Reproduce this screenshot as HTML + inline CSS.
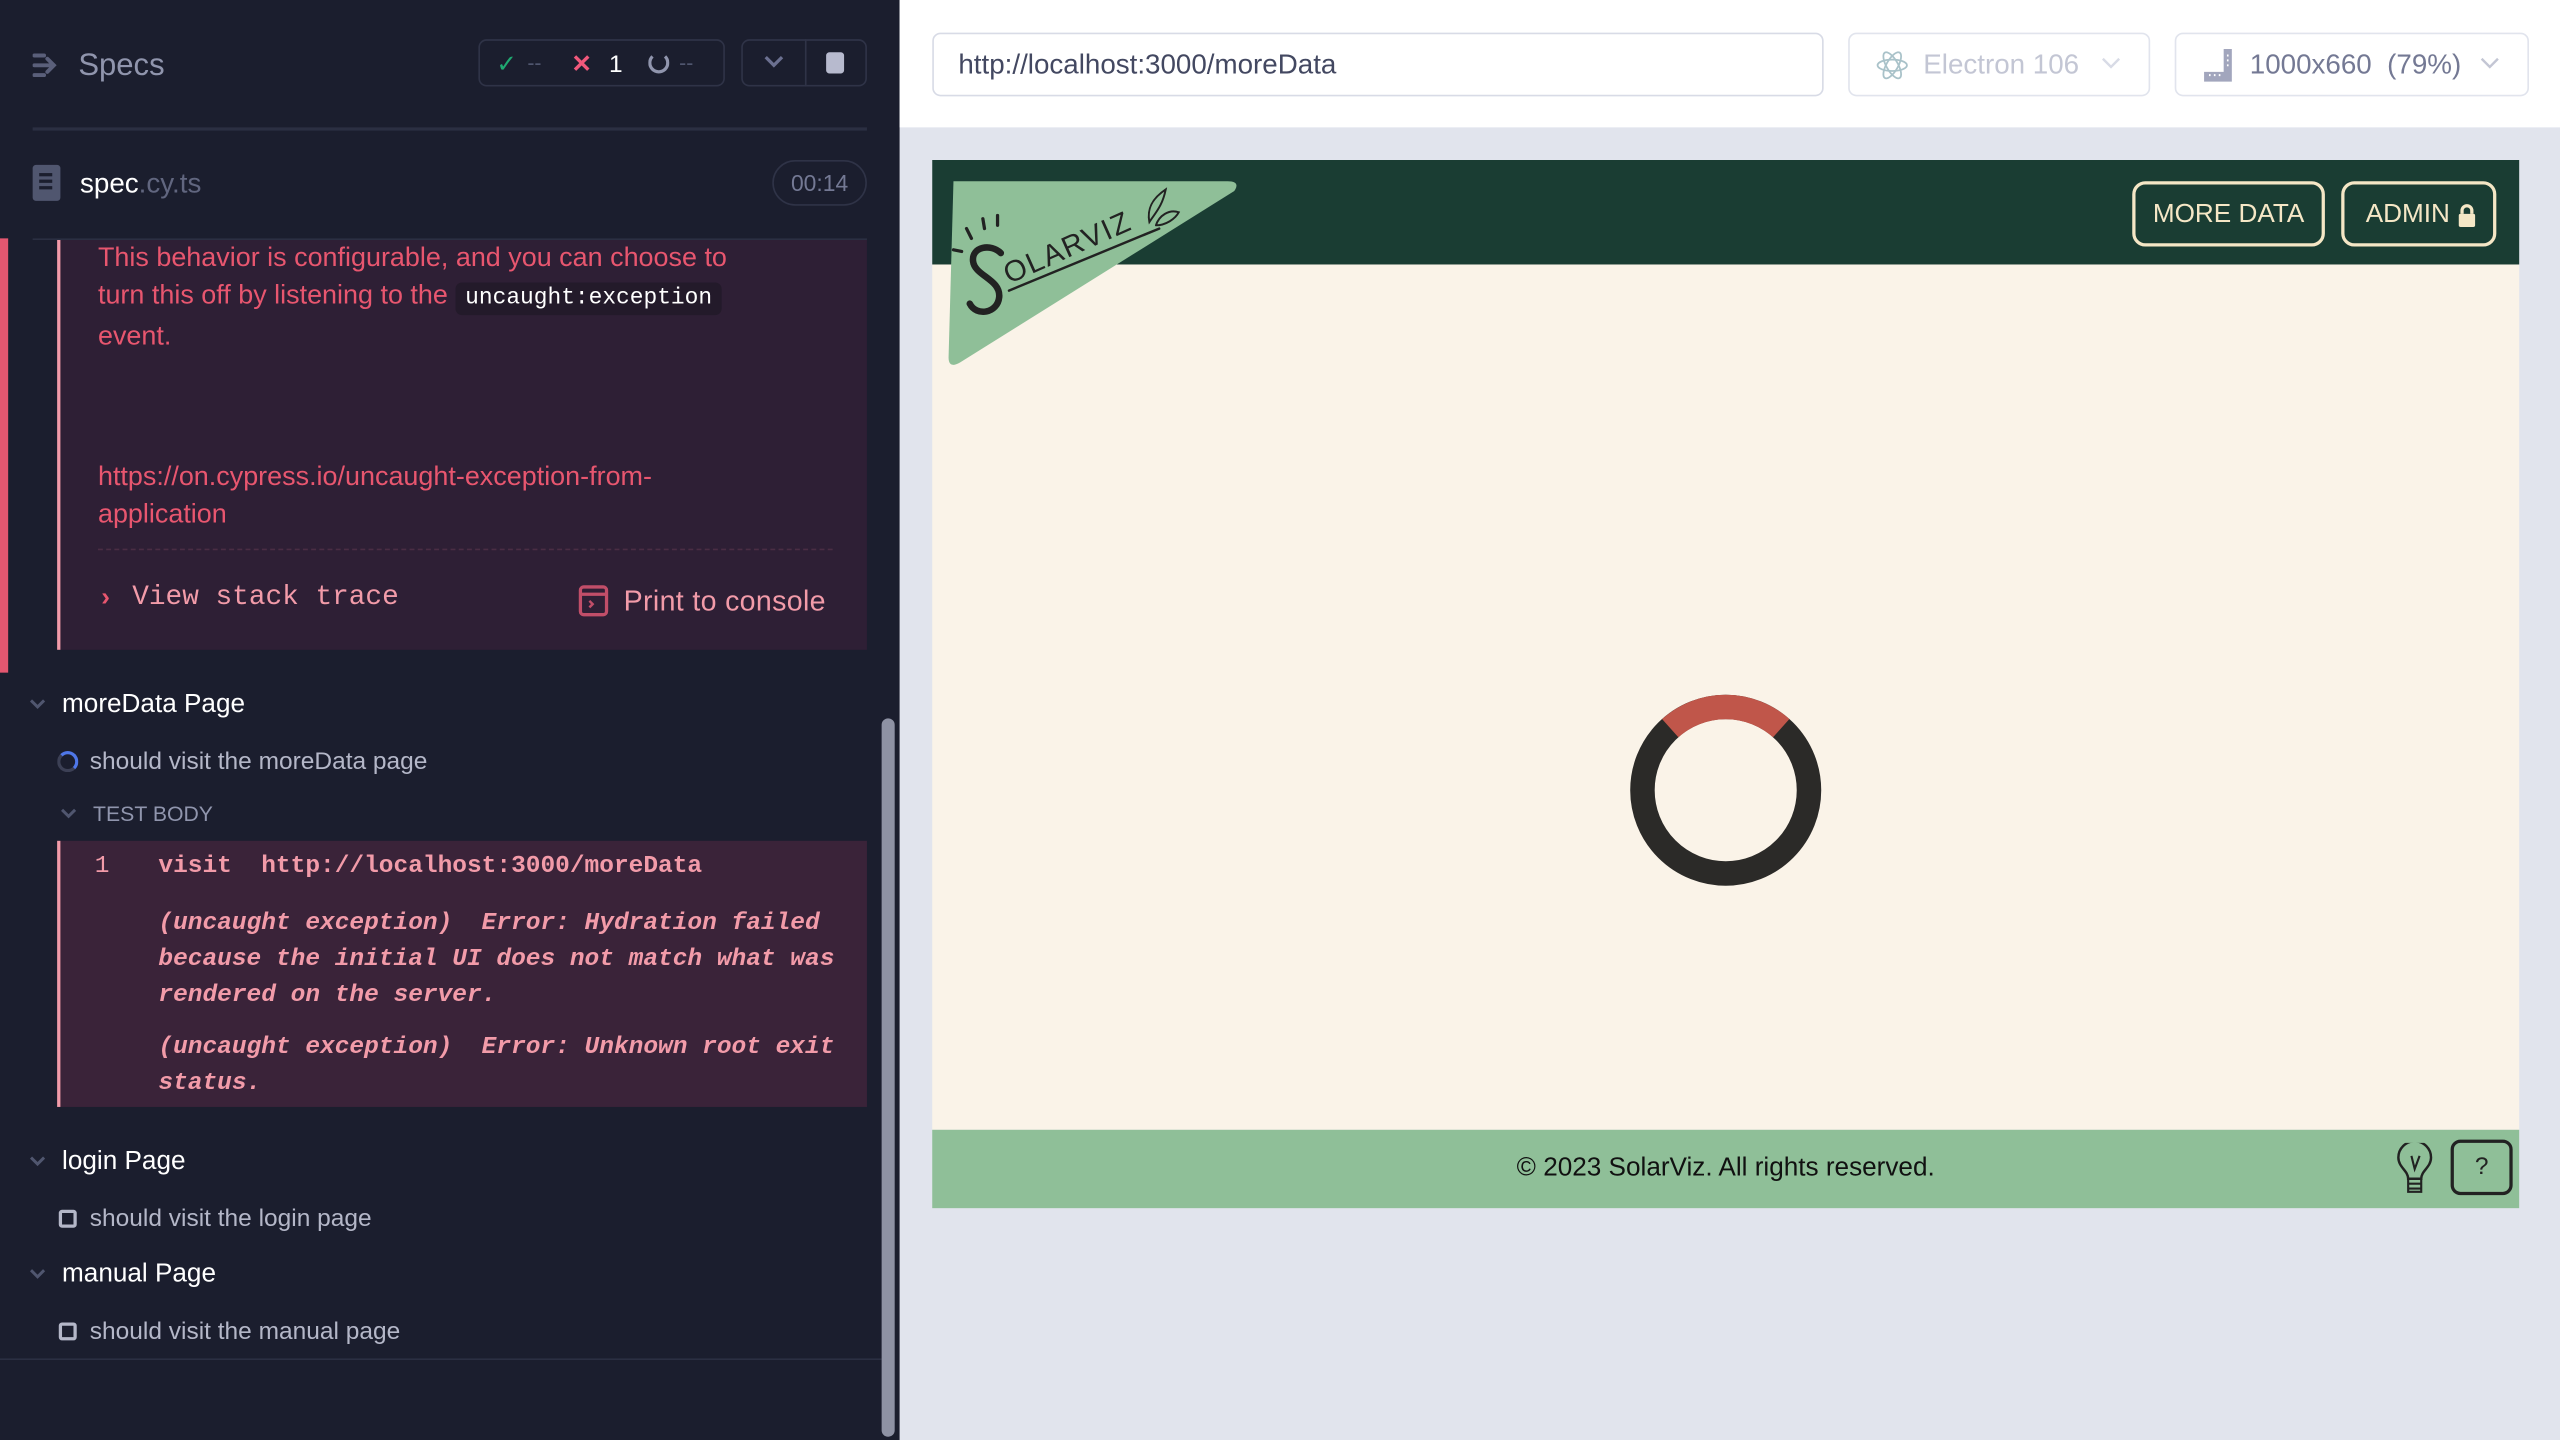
<!DOCTYPE html>
<html><head><meta charset="utf-8"><style>
*{box-sizing:border-box;margin:0;padding:0}
html,body{width:2560px;height:1440px;overflow:hidden;background:#1b1e2e}
#w{position:absolute;left:0;top:0;width:1568px;height:882px;transform:scale(1.632653);transform-origin:0 0;font-family:"Liberation Sans",sans-serif}
.a{position:absolute}
.mono{font-family:"Liberation Mono","DejaVu Sans Mono",monospace}
</style></head><body><div id="w">
<!-- left panel -->
<div class="a" style="left:0;top:0;width:551px;height:882px;background:#1b1e2e"></div>
<svg class="a" style="left:20px;top:32px" width="18" height="16" viewBox="0 0 18 16"><g stroke="#5a5f7a" stroke-width="2.4" stroke-linecap="round" fill="none"><path d="M1 2h6M1 8h11M1 14h6M9 4l4 4-4 4"/></g></svg>
<div class="a" style="left:48px;top:30px;font-size:19px;color:#9095ad">Specs</div>
<div class="a" style="left:293px;top:24px;width:151px;height:29px;border:1px solid #2f3347;border-radius:5px"></div>
<div class="a" style="left:304px;top:30px;font-size:15px;color:#1fa971">✓</div>
<div class="a" style="left:323px;top:31px;font-size:13px;color:#50566f">--</div>
<div class="a" style="left:350px;top:30px;font-size:15px;color:#f0587b;font-weight:bold">✕</div>
<div class="a" style="left:373px;top:31px;font-size:15px;color:#fff">1</div>
<div class="a" style="left:397px;top:32px;width:13px;height:13px;border:2px solid #9095ad;border-top-color:transparent;border-radius:50%"></div>
<div class="a" style="left:416px;top:31px;font-size:13px;color:#50566f">--</div>
<div class="a" style="left:454px;top:24px;width:77px;height:29px;border:1px solid #2f3347;border-radius:5px"></div>
<div class="a" style="left:493px;top:24px;width:1px;height:29px;background:#2f3347"></div>
<svg class="a" style="left:467px;top:33px" width="14" height="10"><path d="M2 2l5 5 5-5" stroke="#6b7090" stroke-width="2" fill="none"/></svg>
<div class="a" style="left:506px;top:32px;width:11px;height:13px;background:#b7bace;border-radius:2px"></div>
<div class="a" style="left:20px;top:78px;width:511px;height:2px;background:#2b2f42"></div>
<div class="a" style="left:20px;top:101px;width:17px;height:22px;background:#50566f;border-radius:2px"></div>
<div class="a" style="left:24px;top:106px;width:8px;height:2px;background:#1b1e2e;box-shadow:0 4px 0 #1b1e2e,0 8px 0 #1b1e2e"></div>
<div class="a" style="left:49px;top:103px;font-size:17px;color:#fff">spec<span style="color:#61667f">.cy.ts</span></div>
<div class="a" style="left:473px;top:98px;width:58px;height:28px;border:1px solid #2f3347;border-radius:14px;color:#747994;font-size:14px;text-align:center;line-height:26px">00:14</div>
<div class="a" style="left:20px;top:146px;width:511px;height:1px;background:#2b2f42"></div>
<div class="a" style="left:0;top:146px;width:5px;height:266px;background:#e45770"></div>
<div class="a" style="left:35px;top:147px;width:496px;height:251px;background:#2e1f35;border-left:2px solid #f29ba9"></div>
<div class="a" style="left:60px;top:147px;width:460px;font-size:16.5px;line-height:23px;color:#e8566f;white-space:nowrap">This behavior is configurable, and you can choose to<br>turn this off by listening to the <span class="mono" style="background:#231a2a;color:#fff;font-size:14px;padding:2px 6px;border-radius:4px">uncaught:exception</span><br>event.</div>
<div class="a" style="left:60px;top:281px;width:390px;font-size:16.5px;line-height:23px;color:#e8566f">https://on.cypress.io/uncaught-exception-from-application</div>
<div class="a" style="left:60px;top:336px;width:450px;border-top:1px dashed #4a2d44"></div>
<div class="a" style="left:62px;top:358px;font-size:16px;color:#e8566f;font-weight:bold">›</div>
<div class="a mono" style="left:81px;top:357px;font-size:17px;color:#f29ba9">View stack trace</div>
<svg class="a" style="left:354px;top:358px" width="20" height="20"><rect x="1.5" y="1.5" width="16" height="17" rx="2" stroke="#c14e69" stroke-width="2" fill="none"/><path d="M2 6h15" stroke="#c14e69" stroke-width="2"/><path d="M7 10l2 2-2 2" stroke="#c14e69" stroke-width="1.5" fill="none"/></svg>
<div class="a" style="left:382px;top:358px;font-size:17.5px;color:#f29ba9;letter-spacing:0.2px">Print to console</div>
<svg class="a" style="left:17px;top:427px" width="12" height="10"><path d="M2 2l4 4 4-4" stroke="#50566f" stroke-width="1.8" fill="none"/></svg>
<div class="a" style="left:38px;top:423px;font-size:16px;color:#fff">moreData Page</div>
<div class="a" style="left:35px;top:460px;width:13px;height:13px;border:2px solid #3c4055;border-right-color:#4f77e8;border-top-color:#4f77e8;border-radius:50%"></div>
<div class="a" style="left:55px;top:458px;font-size:15px;color:#b4b7c8">should visit the moreData page</div>
<svg class="a" style="left:36px;top:494px" width="12" height="10"><path d="M2 2l4 4 4-4" stroke="#50566f" stroke-width="1.8" fill="none"/></svg>
<div class="a" style="left:57px;top:491px;font-size:13px;color:#9095ad">TEST BODY</div>
<div class="a" style="left:35px;top:515px;width:496px;height:163px;background:#3a2339;border-left:2px solid #f29ba9"></div>
<div class="a mono" style="left:58px;top:522px;font-size:15px;color:#f29ba9">1</div>
<div class="a mono" style="left:97px;top:522px;font-size:15px;color:#f29ba9;font-weight:bold">visit&nbsp; http://localhost:3000/moreData</div>
<div class="a mono" style="left:97px;top:555px;width:420px;font-size:15px;line-height:22px;color:#f29ba9;font-weight:bold;font-style:italic">(uncaught exception)&nbsp; Error: Hydration failed because the initial UI does not match what was rendered on the server.</div>
<div class="a mono" style="left:97px;top:631px;width:420px;font-size:15px;line-height:22px;color:#f29ba9;font-weight:bold;font-style:italic">(uncaught exception)&nbsp; Error: Unknown root exit status.</div>
<svg class="a" style="left:17px;top:707px" width="12" height="10"><path d="M2 2l4 4 4-4" stroke="#50566f" stroke-width="1.8" fill="none"/></svg>
<div class="a" style="left:38px;top:703px;font-size:16px;color:#fff">login Page</div>
<div class="a" style="left:36px;top:741px;width:11px;height:11px;border:2px solid #b4b7c8;border-radius:2px"></div>
<div class="a" style="left:55px;top:738px;font-size:15px;color:#b4b7c8">should visit the login page</div>
<svg class="a" style="left:17px;top:776px" width="12" height="10"><path d="M2 2l4 4 4-4" stroke="#50566f" stroke-width="1.8" fill="none"/></svg>
<div class="a" style="left:38px;top:772px;font-size:16px;color:#fff">manual Page</div>
<div class="a" style="left:36px;top:810px;width:11px;height:11px;border:2px solid #b4b7c8;border-radius:2px"></div>
<div class="a" style="left:55px;top:807px;font-size:15px;color:#b4b7c8">should visit the manual page</div>
<div class="a" style="left:0;top:832px;width:540px;height:1px;background:#2b2f42"></div>
<div class="a" style="left:540px;top:440px;width:8px;height:440px;background:#8e92a4;border-radius:4px"></div>
<!-- right -->
<div class="a" style="left:551px;top:0;width:1017px;height:882px;background:#e1e4ed"></div>
<div class="a" style="left:551px;top:0;width:1017px;height:78px;background:#fff"></div>
<div class="a" style="left:571px;top:20px;width:546px;height:39px;border:1px solid #d8dbe6;border-radius:5px"></div>
<div class="a" style="left:587px;top:30px;font-size:17px;color:#434861">http://localhost:3000/moreData</div>
<div class="a" style="left:1132px;top:20px;width:185px;height:39px;border:1px solid #e1e4ed;border-radius:5px"></div>
<svg class="a" style="left:1149px;top:29px" width="20" height="22" viewBox="0 0 20 22"><g stroke="#a9c2c9" stroke-width="1.1" fill="none"><ellipse cx="10" cy="11" rx="9" ry="3.5" transform="rotate(60 10 11)"/><ellipse cx="10" cy="11" rx="9" ry="3.5" transform="rotate(-60 10 11)"/><ellipse cx="10" cy="11" rx="9" ry="3.5"/></g></svg>
<div class="a" style="left:1178px;top:30px;font-size:17px;color:#c3c6d4">Electron 106</div>
<svg class="a" style="left:1287px;top:35px" width="12" height="8"><path d="M1 1l5 5 5-5" stroke="#d8dbe6" stroke-width="1.5" fill="none"/></svg>
<div class="a" style="left:1332px;top:20px;width:217px;height:39px;border:1px solid #e1e4ed;border-radius:5px"></div>
<svg class="a" style="left:1349px;top:29px" width="22" height="22"><path d="M13 1h5v20H1v-6h12z" fill="#a2a6bd"/><path d="M4 17h1M7 17h1M10 17h1M15 5h1M15 8h1M15 11h1" stroke="#fff" stroke-width="1.2"/></svg>
<div class="a" style="left:1378px;top:30px;font-size:17px;color:#747994">1000x660 &nbsp;(79%)</div>
<svg class="a" style="left:1519px;top:35px" width="12" height="8"><path d="M1 1l5 5 5-5" stroke="#c3c6d4" stroke-width="1.5" fill="none"/></svg>
<!-- app -->
<div class="a" style="left:571px;top:98px;width:972px;height:64px;background:#1a3d33"></div>
<div class="a" style="left:571px;top:162px;width:972px;height:530px;background:#faf3e8"></div>
<div class="a" style="left:571px;top:692px;width:972px;height:48px;background:#8fbf98"></div>
<svg class="a" style="left:580px;top:110px" width="180" height="115" viewBox="0 0 180 115"><path d="M4 1H172q8 0 4 6L8 112q-7 4-7-3z" fill="#8fbf98"/>
<g stroke="#222" fill="none" stroke-linecap="round"><path d="M33 45c-6-6-18-4-17 5 1 9 17 11 16 22-1 10-14 12-18 4" stroke-width="4"/><path d="M4 43l5 1M12 30l3 6M22 24l1 6M31 22l0 6" stroke-width="2"/><path d="M38 68L130 30" stroke-width="1.5"/><path d="M124 26c4-6 8-10 10-20-6 4-12 10-10 20zM128 28c6 0 12-4 14-8-6-2-12 2-14 8" stroke-width="1.2"/></g>
<text x="38" y="64" transform="rotate(-24 38 64)" font-family="Liberation Sans" font-size="18" fill="#222" letter-spacing="1">OLARVIZ</text></svg>
<div class="a" style="left:1306px;top:111px;width:118px;height:40px;border:2px solid #f5e7c6;border-radius:8px;color:#f5e7c6;font-size:16px;text-align:center;line-height:38px">MORE DATA</div>
<div class="a" style="left:1434px;top:111px;width:95px;height:40px;border:2px solid #f5e7c6;border-radius:8px;color:#f5e7c6;font-size:16px;line-height:38px;padding-left:13px">ADMIN</div>
<svg class="a" style="left:1505px;top:124px" width="12" height="15"><path d="M3 7V5a3 3 0 016 0v2" stroke="#f5e7c6" stroke-width="2" fill="none"/><rect x="1" y="7" width="10" height="8" rx="1" fill="#f5e7c6"/></svg>
<svg class="a" style="left:997px;top:424px" width="120" height="120"><circle cx="60" cy="60" r="51" stroke="#2b2a28" stroke-width="15" fill="none"/><path d="M26 22A51 51 0 0 1 94 22" stroke="#c0564a" stroke-width="15" fill="none"/></svg>
<div class="a" style="left:571px;top:707px;width:972px;text-align:center;font-size:16px;color:#111">© 2023 SolarViz. All rights reserved.</div>
<svg class="a" style="left:1468px;top:700px" width="24" height="34"><path d="M7 22c0-5-6-7-6-13a10 10 0 0120 0c0 6-6 8-6 13z" stroke="#222" stroke-width="1.5" fill="none"/><path d="M7 22h8v8H7zM7 25h8M7 28h8M9 8l2 8 3-8" stroke="#222" stroke-width="1.3" fill="none"/></svg>
<div class="a" style="left:1501px;top:698px;width:38px;height:34px;border:2px solid #222;border-radius:6px;text-align:center;line-height:30px;font-size:15px;color:#222">?</div>
</div></body></html>
